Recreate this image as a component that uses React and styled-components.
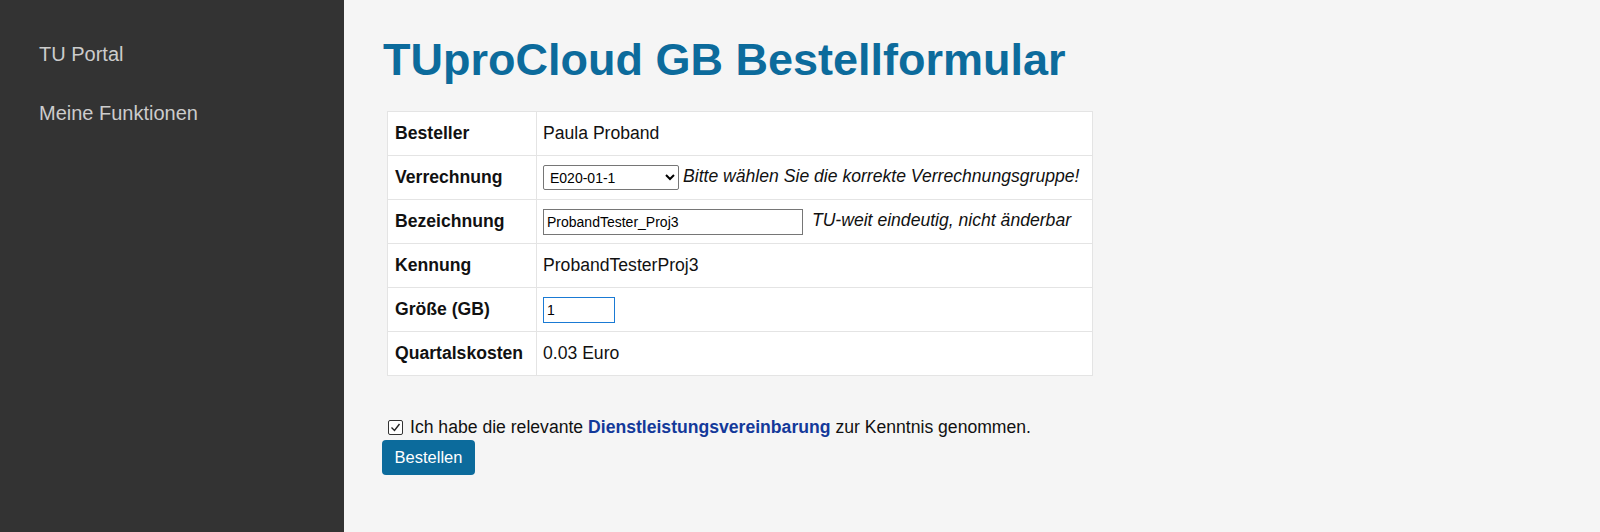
import React from "react";
import styled, { createGlobalStyle } from "styled-components";

const G = createGlobalStyle`
  html,body{margin:0;padding:0;background:#f5f5f5;font-family:"Liberation Sans",Arial,sans-serif;}
`;
const Page = styled.div`display:flex;min-height:532px;`;
const Side = styled.nav`width:344px;flex:none;background:#333;padding:43px 0 0 39px;box-sizing:border-box;display:flex;flex-direction:column;gap:37px;`;
const NavLink = styled.a`color:#ccc;font-size:20px;text-decoration:none;line-height:22px;`;
const Main = styled.main`flex:1;padding:34px 0 0 38px;`;
const Title = styled.h1`margin:0 0 25px 1px;font-size:45px;font-weight:bold;color:#0c6b9c;line-height:52px;`;
const Table = styled.table`border-collapse:collapse;background:#fff;margin-left:5px;width:706px;font-size:17.6px;color:#111;`;
const Th = styled.th`text-align:left;border:1px solid #e4e4e4;padding:0 7px;height:43px;width:134px;white-space:nowrap;`;
const Td = styled.td`border:1px solid #e4e4e4;padding:0 6px;height:43px;white-space:nowrap;`;
const Hint = styled.i`margin-left:4px;`;
const Select = styled.select`width:136px;height:25px;font-family:inherit;font-size:14px;border:1px solid #767676;border-radius:2px;background:#fff;vertical-align:middle;padding:0 2px;`;
const Input = styled.input`width:${p=>p.w}px;height:26px;box-sizing:border-box;font-family:inherit;font-size:14px;border:1px solid ${p=>p.focus?"#1a7ad4":"#767676"};padding:0 3px;vertical-align:middle;outline:none;`;
const Check = styled.label`display:flex;align-items:center;gap:7px;margin:41px 0 0 6px;font-size:17.6px;color:#111;`;
const Box = styled.span`width:13px;height:13px;border:1px solid #333;border-radius:2px;background:#fff;display:flex;align-items:center;justify-content:center;`;
const Link = styled.a`color:#13399a;font-weight:bold;text-decoration:none;`;
const Btn = styled.button`margin-top:2px;background:#0c6b9c;color:#fff;border:none;border-radius:4px;font-family:inherit;font-size:16.5px;height:35px;width:93px;`;

export default function App(){
  return <><G/><Page>
    <Side><NavLink>TU Portal</NavLink><NavLink>Meine Funktionen</NavLink></Side>
    <Main>
      <Title>TUproCloud GB Bestellformular</Title>
      <Table><tbody>
        <tr><Th>Besteller</Th><Td>Paula Proband</Td></tr>
        <tr><Th>Verrechnung</Th><Td><Select defaultValue="a"><option value="a">E020-01-1</option></Select><Hint>Bitte wählen Sie die korrekte Verrechnungsgruppe!</Hint></Td></tr>
        <tr><Th>Bezeichnung</Th><Td><Input w={260} defaultValue="ProbandTester_Proj3"/> <Hint>TU-weit eindeutig, nicht änderbar</Hint></Td></tr>
        <tr><Th>Kennung</Th><Td>ProbandTesterProj3</Td></tr>
        <tr><Th>Größe (GB)</Th><Td><Input w={72} focus defaultValue="1"/></Td></tr>
        <tr><Th>Quartalskosten</Th><Td>0.03 Euro</Td></tr>
      </tbody></Table>
      <Check><Box><svg width="11" height="11" viewBox="0 0 11 11"><path d="M1.5 5.5l3 3 5-6.5" fill="none" stroke="#222" strokeWidth="1.4"/></svg></Box><span>Ich habe die relevante <Link>Dienstleistungsvereinbarung</Link> zur Kenntnis genommen.</span></Check>
      <Btn>Bestellen</Btn>
    </Main>
  </Page></>;
}
